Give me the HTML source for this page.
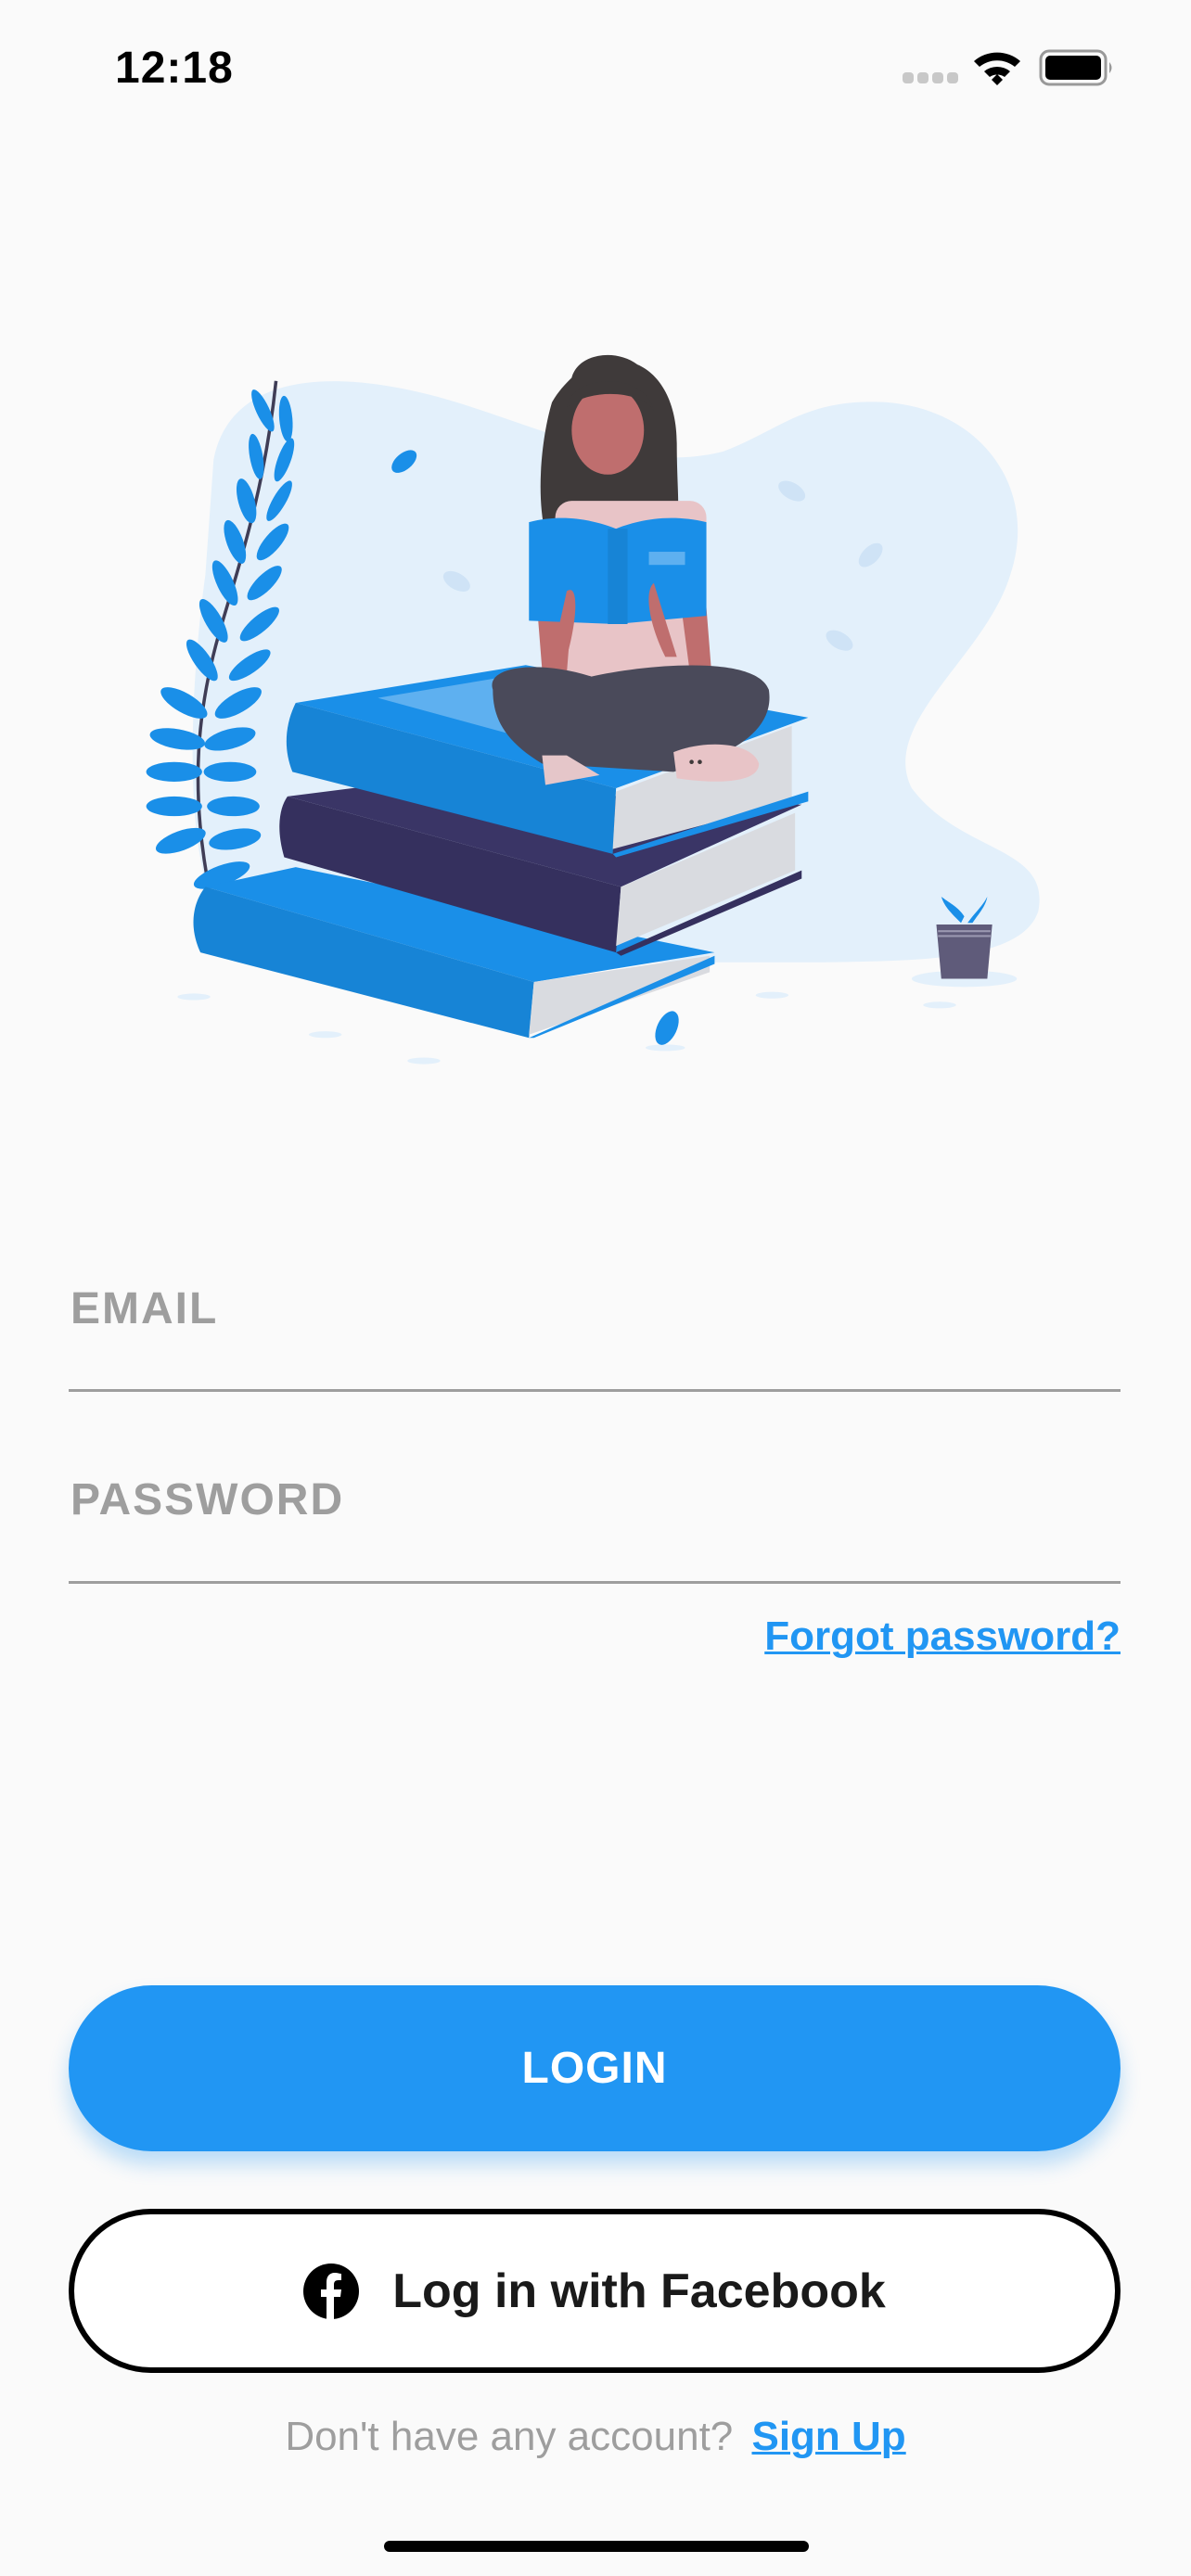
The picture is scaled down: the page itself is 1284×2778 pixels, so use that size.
<!DOCTYPE html>
<html><head><meta charset="utf-8">
<style>
*{margin:0;padding:0;box-sizing:border-box}
html,body{width:1284px;height:2778px;background:#fafafa;overflow:hidden;font-family:"Liberation Sans",sans-serif;position:relative}
.abs{position:absolute}
.time{left:124px;top:46px;font-size:48px;font-weight:bold;color:#000;letter-spacing:1px}
.label{left:76px;font-size:48px;font-weight:bold;color:#9e9e9e;letter-spacing:2px}
.line{left:74px;width:1134px;height:3px;background:#9e9e9e}
.forgot{right:76px;top:1740px;font-size:44px;font-weight:bold;color:#2196f3;text-decoration:underline;text-decoration-thickness:3px}
.login{left:74px;top:2141px;width:1134px;height:179px;border-radius:90px;background:#2196f3;color:#fff;font-size:48px;font-weight:bold;display:flex;align-items:center;justify-content:center;box-shadow:0 14px 22px rgba(33,150,243,.3);letter-spacing:1px}
.fb{left:74px;top:2382px;width:1134px;height:177px;border-radius:90px;border:6px solid #000;background:#fff;display:flex;align-items:center;justify-content:center;font-size:52px;font-weight:bold;color:#1a1a1a}
.fb svg{margin-right:36px}
.bottom{left:0;width:1284px;top:2603px;text-align:center;font-size:44px;color:#9e9e9e}
.bottom b{color:#2196f3;text-decoration:underline;text-decoration-thickness:3px;margin-left:8px}
.home{left:414px;top:2740px;width:458px;height:12px;border-radius:6px;background:#000}
</style></head><body>
<div class="abs time">12:18</div>
<svg class="abs" style="left:960px;top:40px" width="240" height="70" viewBox="960 40 240 70">
 <g fill="#c8c8c8"><rect x="973" y="78" width="12" height="12" rx="4"/><rect x="989" y="78" width="12" height="12" rx="4"/><rect x="1005" y="78" width="12" height="12" rx="4"/><rect x="1021" y="78" width="12" height="12" rx="4"/></g>
 <g fill="#000"><path d="M1050 66 A38 38 0 0 1 1100 66 L1094 72 A30 30 0 0 0 1056 72Z"/><path d="M1061 77 A22 22 0 0 1 1089 77 L1083 83 A14 14 0 0 0 1067 83Z"/><path d="M1069 86 L1075 80 L1081 86 L1075 92Z"/></g>
 <rect x="1122" y="55" width="70" height="36" rx="9" fill="none" stroke="#999" stroke-width="3"/>
 <rect x="1127" y="60" width="60" height="26" rx="5" fill="#000"/>
 <path d="M1196 67 q5 6 0 12z" fill="#999"/>
</svg>
<svg class="abs" style="left:0;top:0" width="1284" height="1200" viewBox="0 0 725 677.6">
 <path d="M130,280 C140,228 200,225 260,240 C320,255 380,290 440,275 C475,262 490,242 540,245 C600,250 632,300 615,350 C600,400 535,440 555,480 C585,520 640,515 632,555 C622,585 560,585 500,586 L300,586 L135,560 C108,520 118,400 125,350 Z" fill="#e3f0fb"/>
 <g fill="#e3f0fb"><ellipse cx="118" cy="607" rx="10" ry="2"/><ellipse cx="198" cy="630" rx="10" ry="2"/><ellipse cx="258" cy="646" rx="10" ry="2"/><ellipse cx="470" cy="606" rx="10" ry="2"/><ellipse cx="572" cy="612" rx="10" ry="2"/><ellipse cx="587" cy="596" rx="32" ry="5"/><ellipse cx="405" cy="638" rx="12" ry="2"/></g>
 <path d="M128,545 C115,480 120,430 135,380 C150,330 162,290 168,232" stroke="#3f3d56" stroke-width="2" fill="none"/>
 <g fill="#1a8fe8">
  <ellipse cx="108" cy="450" rx="17" ry="6" transform="rotate(10 108 450)"/><ellipse cx="140" cy="450" rx="16" ry="6" transform="rotate(-15 140 450)"/>
  <ellipse cx="106" cy="470" rx="17" ry="6"/><ellipse cx="140" cy="470" rx="16" ry="6"/>
  <ellipse cx="106" cy="491" rx="17" ry="6"/><ellipse cx="142" cy="491" rx="16" ry="6"/>
  <ellipse cx="110" cy="512" rx="16" ry="6" transform="rotate(-20 110 512)"/><ellipse cx="143" cy="511" rx="16" ry="6" transform="rotate(-10 143 511)"/>
  <ellipse cx="135" cy="533" rx="18" ry="6" transform="rotate(-20 135 533)"/>
  <ellipse cx="112" cy="428" rx="16" ry="6" transform="rotate(30 112 428)"/><ellipse cx="145" cy="428" rx="16" ry="6" transform="rotate(-30 145 428)"/>
  <ellipse cx="123" cy="402" rx="15" ry="5" transform="rotate(55 123 402)"/><ellipse cx="152" cy="405" rx="15" ry="5" transform="rotate(-35 152 405)"/>
  <ellipse cx="130" cy="378" rx="15" ry="5" transform="rotate(60 130 378)"/><ellipse cx="158" cy="380" rx="15" ry="5" transform="rotate(-40 158 380)"/>
  <ellipse cx="137" cy="355" rx="15" ry="5" transform="rotate(65 137 355)"/><ellipse cx="161" cy="355" rx="14" ry="5" transform="rotate(-45 161 355)"/>
  <ellipse cx="143" cy="330" rx="14" ry="5" transform="rotate(70 143 330)"/><ellipse cx="166" cy="330" rx="14" ry="5" transform="rotate(-50 166 330)"/>
  <ellipse cx="150" cy="305" rx="14" ry="5" transform="rotate(75 150 305)"/><ellipse cx="170" cy="305" rx="14" ry="4" transform="rotate(-60 170 305)"/>
  <ellipse cx="156" cy="278" rx="14" ry="4" transform="rotate(80 156 278)"/><ellipse cx="173" cy="280" rx="14" ry="4" transform="rotate(-70 173 280)"/>
  <ellipse cx="160" cy="250" rx="14" ry="4" transform="rotate(65 160 250)"/><ellipse cx="174" cy="255" rx="14" ry="4" transform="rotate(85 174 255)"/>
 </g>
 <ellipse cx="246" cy="281" rx="9" ry="5" transform="rotate(-40 246 281)" fill="#1a8fe8"/>
 <ellipse cx="406" cy="626" rx="6" ry="11" transform="rotate(25 406 626)" fill="#1a8fe8"/>
 <g fill="#cfe3f6"><ellipse cx="482" cy="299" rx="9" ry="5" transform="rotate(30 482 299)"/><ellipse cx="278" cy="354" rx="9" ry="5" transform="rotate(30 278 354)"/><ellipse cx="530" cy="338" rx="9" ry="5" transform="rotate(-45 530 338)"/><ellipse cx="511" cy="390" rx="9" ry="5" transform="rotate(30 511 390)"/></g>
 <path d="M585,562 C578,555 575,552 573,546 C578,550 583,552 587,558Z M589,562 C594,555 598,552 601,546 C600,552 596,556 592,562Z" fill="#1a8fe8"/>
 <path d="M570,563 H604 L601,596 H573Z" fill="#5f5b7a"/>
 <path d="M571,567 H603 M571,570 H603" stroke="#9a97b0" stroke-width="1.2"/>
 <path d="M125,540 L180,528 L435,580 L325,598Z" fill="#1a8fe8"/>
 <path d="M125,540 L325,598 L322,632 L122,580 C115,565 117,550 125,540Z" fill="#1784d6"/>
 <path d="M325,598 L432,582 L432,592 L322,630Z" fill="#d9dbe0"/>
 <path d="M322,632 L435,582 L435,587 L325,632Z" fill="#1a8fe8"/>
 <path d="M175,485 L230,478 L488,490 L378,540Z" fill="#3a3566"/>
 <path d="M175,485 L378,540 L375,580 L173,522 C168,505 170,492 175,485Z" fill="#35305e"/>
 <path d="M378,540 L484,495 L484,530 L375,576Z" fill="#d9dbe0"/>
 <path d="M375,580 L488,530 L488,535 L378,582Z" fill="#35305e"/>
 <path d="M180,428 L320,405 L492,437 L375,480Z" fill="#1a8fe8"/>
 <path d="M230,425 L320,410 L420,440 L340,455Z" fill="#5eb0f0"/>
 <path d="M180,428 L375,480 L373,520 L178,470 C172,455 174,440 180,428Z" fill="#1784d6"/>
 <path d="M375,482 L482,442 L482,488 L373,517Z" fill="#d9dbe0"/>
 <path d="M373,520 L492,482 L492,488 L375,522Z" fill="#1a8fe8"/>
 <path d="M348,230 C352,215 375,212 388,222 C402,228 412,245 412,270 C412,295 414,310 412,320 L332,325 C326,300 330,265 336,245 C340,238 344,234 348,230Z" fill="#3f3a3a"/>
 <rect x="338" y="305" width="92" height="110" rx="10" fill="#e8c4c7"/>
 <ellipse cx="370" cy="262" rx="22" ry="27" fill="#bf6e6e"/>
 <path d="M345,248 C348,228 392,225 398,250 C390,238 360,236 345,248Z" fill="#3f3a3a"/>
 <path d="M327,370 L330,408 L345,410 L348,372Z M415,372 L420,410 L433,408 L430,370Z" fill="#bf6e6e"/>
 <path d="M322,318 C345,312 365,318 375,322 C385,318 405,312 430,318 L430,375 L375,380 L322,378Z" fill="#1a8fe8"/>
 <path d="M370,322 L382,322 L382,380 L370,380Z" fill="#1784d6"/>
 <rect x="395" y="336" width="22" height="8" fill="#5eb0f0"/>
 <path d="M345,360 C352,355 352,375 345,400 L335,405Z M398,355 C392,360 395,380 405,400 L412,400Z" fill="#bf6e6e"/>
 <path d="M300,420 C295,405 330,402 360,412 C390,405 460,398 468,420 C472,445 445,460 410,470 L330,465 C305,450 300,435 300,420Z" fill="#4a4a5a"/>
 <path d="M330,460 L345,460 L365,472 L332,478Z" fill="#e5c6c9"/>
 <path d="M410,458 C430,450 458,452 462,465 C462,476 440,478 412,474Z" fill="#e8c4c7"/>
 <circle cx="421" cy="464" r="1.3" fill="#3f3a3a"/><circle cx="426" cy="464" r="1.3" fill="#3f3a3a"/>
</svg>

<div class="abs label" style="top:1384px">EMAIL</div>
<div class="abs line" style="top:1498px"></div>
<div class="abs label" style="top:1590px">PASSWORD</div>
<div class="abs line" style="top:1705px"></div>
<div class="abs forgot">Forgot password?</div>

<div class="abs login">LOGIN</div>
<div class="abs fb"><svg width="60" height="60" viewBox="0 0 60 60"><circle cx="30" cy="30" r="30" fill="#000"/><path d="M33 60 V36 H40 L41 28 H33 V23 C33 20 34 18 38 18 H41 V11 C39 11 37 10 34 10 C28 10 25 14 25 20 V28 H19 V36 H25 V60Z" fill="#fff"/></svg>Log in with Facebook</div>
<div class="abs bottom">Don't have any account? <b>Sign Up</b></div>
<div class="abs home"></div>
</body></html>
